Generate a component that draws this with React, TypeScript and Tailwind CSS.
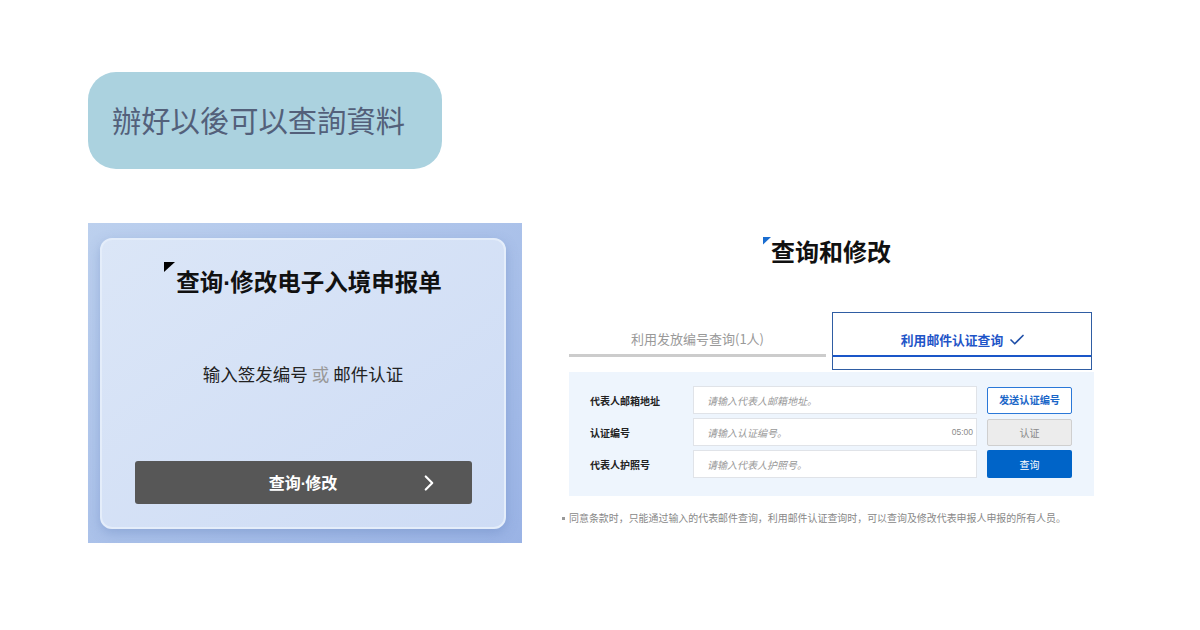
import { Check, ChevronRight } from "lucide-react";

const SC = "font-['Noto_Sans_CJK_SC','Liberation_Sans',sans-serif]";
const DOT = "font-['Liberation_Sans',sans-serif] tracking-[-1px]";

const rows = [
  { label: "代表人邮箱地址", placeholder: "请输入代表人邮箱地址。" },
  { label: "认证编号", placeholder: "请输入认证编号。", timer: "05:00" },
  { label: "代表人护照号", placeholder: "请输入代表人护照号。" },
];

const LeftShot = () => (
  <div className="w-[434px] h-[320px] pt-[15px] pl-[12px] bg-gradient-to-br from-[#bcd0ee] to-[#9ab3e5]">
    <div className="w-[406px] h-[291px] rounded-[12px] border-2 border-[#e4edfa] bg-gradient-to-br from-[#dbe6f7] to-[#cedcf5] shadow-[0_4px_12px_rgba(90,120,180,0.35)] flex flex-col items-center pt-[22px]">
      <div className="flex items-start">
        <svg width="12" height="11" viewBox="0 0 12 11">
          <path d="M0 0H11L0 10Z" fill="#000" />
        </svg>
        <h1 className="text-[23.5px] leading-[36px] mt-[1px] font-bold text-[#111]">
          查询<span className={DOT}>·</span>修改电子入境申报单
        </h1>
      </div>
      <p className="mt-[61px] text-[17.5px] leading-[24px] text-[#222]">
        输入签发编号 <span className="text-[#999]">或</span> 邮件认证
      </p>
      <button className="relative mt-[75px] w-[337px] h-[43px] rounded-[3px] bg-[#575757] text-white text-[16px] font-bold flex items-center justify-center">
        <span>
          查询<span className={DOT}>·</span>修改
        </span>
        <ChevronRight size={26} strokeWidth={2} className="absolute right-[30px] top-[9px]" />
      </button>
    </div>
  </div>
);

const RightShot = () => (
  <div className="w-[540px] ml-[40px]">
    <div className="flex items-start ml-[201px] h-[89px]">
      <svg width="8" height="8" viewBox="0 0 8 8" className="mt-[14px]">
        <path d="M0 0H8L0 7.5Z" fill="#1a6dd0" />
      </svg>
      <h2 className="text-[24px] leading-[36px] mt-[10px] font-bold text-[#111]">查询和修改</h2>
    </div>

    <div className="ml-[7px] flex h-[58px]">
      <div className="w-[257px] border-b-[3px] border-[#cccccc] h-[45px] flex items-end justify-center pb-[6px] text-[13px] leading-[18px] text-[#999]">
        利用发放编号查询(1人)
      </div>
      <div className="ml-[6px] w-[260px] h-[58px] border border-[#2f5da3]">
        <div className="h-[44px] border-b-2 border-[#1a56c8] flex items-end justify-center pb-[6px] pl-[3px] text-[12.8px] leading-[18px] font-bold text-[#1f55c8]">
          利用邮件认证查询
          <Check size={18} strokeWidth={2.2} className="ml-[5px] text-[#1f4fa8]" />
        </div>
      </div>
    </div>

    <div className="ml-[7px] mt-[2px] w-[525px] h-[124px] bg-[#eef5fd] pl-[21px] pt-[14px]">
      <div className="grid grid-cols-[103px_294px_85px] gap-y-[4px] auto-rows-[28px] items-center">
        {rows.map((row, i) => (
          <div key={row.label} className="contents">
            <span className="text-[10px] font-bold text-[#222]">{row.label}</span>
            <div className="w-[284px] h-[28px] bg-white border border-[#e0e3e8] pl-[13px] pr-[3px] flex items-center justify-between text-[10px] italic text-[#999]">
              <span>{row.placeholder}</span>
              {row.timer && <span className="not-italic text-[8.5px] text-[#8a8a8a] font-['Liberation_Sans',sans-serif]">{row.timer}</span>}
            </div>
            {i === 0 && (
              <button className="h-[27px] rounded-[2px] border border-[#2a78d8] bg-white text-[10.2px] font-bold text-[#1a66c8]">发送认证编号</button>
            )}
            {i === 1 && (
              <button className="h-[27px] rounded-[2px] border border-[#cfcfcf] bg-[#ececec] text-[10px] text-[#8a8a8a]">认证</button>
            )}
            {i === 2 && (
              <button className="h-[28px] rounded-[2px] bg-[#0064c8] text-[10px] text-white">查询</button>
            )}
          </div>
        ))}
      </div>
    </div>

    <p className="mt-[15px] text-[9.95px] leading-[14px] text-[#888] whitespace-nowrap flex items-center">
      <span className="w-[3px] h-[3px] bg-[#999] mr-[4px] shrink-0" />
      同意条款时，只能通过输入的代表邮件查询，利用邮件认证查询时，可以查询及修改代表申报人申报的所有人员。
    </p>
  </div>
);

export default function App() {
  return (
    <div className={`w-[1200px] h-[630px] bg-white pl-[88px] pt-[72px] overflow-hidden ${SC}`}>
      <div className="w-[354px] h-[97px] rounded-[28px] bg-[#abd2df] flex items-center pl-[24px] pb-[2px]">
        <span className="font-['Noto_Sans_CJK_TC',sans-serif] font-normal text-[29.3px] text-[#53607a]">辦好以後可以查詢資料</span>
      </div>
      <div className="flex items-start mt-[54px]">
        <LeftShot />
        <RightShot />
      </div>
    </div>
  );
}
